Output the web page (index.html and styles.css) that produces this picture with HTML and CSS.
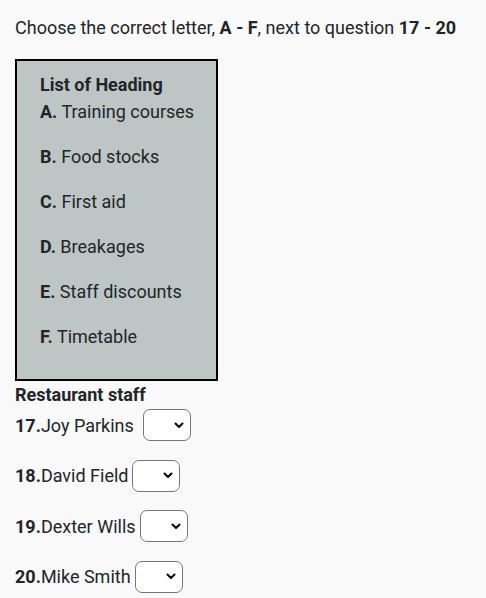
FILE: index.html
```html
<!DOCTYPE html>
<html>
<head>
<meta charset="utf-8">
<link rel="stylesheet" href="styles.css">
</head>
<body>
<div class="page">
  <p class="intro">Choose the correct letter, <b>A - F</b>, next to question <b>17 - 20</b></p>
  <div class="box">
    <div class="box-title">List of Heading</div>
    <p class="item"><b>A.</b> Training courses</p>
    <p class="item"><b>B.</b> Food stocks</p>
    <p class="item"><b>C.</b> First aid</p>
    <p class="item"><b>D.</b> Breakages</p>
    <p class="item"><b>E.</b> Staff discounts</p>
    <p class="item"><b>F.</b> Timetable</p>
  </div>
  <div class="staff-title">Restaurant staff</div>
  <div class="rows">
    <div class="row"><span class="label"><b>17.</b>Joy Parkins</span><span class="gap-wide"></span><select class="pick"><option></option><option>A</option><option>B</option><option>C</option><option>D</option><option>E</option><option>F</option></select></div>
    <div class="row"><span class="label"><b>18.</b>David Field</span><select class="pick"><option></option><option>A</option><option>B</option><option>C</option><option>D</option><option>E</option><option>F</option></select></div>
    <div class="row"><span class="label"><b>19.</b>Dexter Wills</span><select class="pick"><option></option><option>A</option><option>B</option><option>C</option><option>D</option><option>E</option><option>F</option></select></div>
    <div class="row"><span class="label"><b>20.</b>Mike Smith</span><select class="pick"><option></option><option>A</option><option>B</option><option>C</option><option>D</option><option>E</option><option>F</option></select></div>
  </div>
</div>
</body>
</html>
```

FILE: styles.css
```css
html, body {
  margin: 0;
  padding: 0;
  background: #f9f9f9;
}
body {
  font-family: Roboto, "Liberation Sans", sans-serif;
  font-size: 18px;
  line-height: 27px;
  color: #212529;
}
b { font-weight: 700; }
.page {
  padding: 14px 15px 0 15px;
}
.intro {
  margin: 0 0 18px 0;
}
.box {
  width: 203px;
  box-sizing: border-box;
  border: 2px solid #000;
  background: #bdc5c5;
  padding: 10px 8px 11px 23px;
}
.box-title {
  font-weight: 700;
}
.item {
  margin: 0 0 18px 0;
}
.staff-title {
  font-weight: 700;
}
.rows {
  display: flex;
  flex-direction: column;
  gap: 18.5px;
  padding-top: 1px;
}
.row {
  display: flex;
  align-items: center;
  height: 32px;
}
.label {
  margin-right: 4px;
}
.gap-wide {
  width: 5px;
}
.pick {
  appearance: none;
  -webkit-appearance: none;
  width: 48px;
  height: 32px;
  box-sizing: border-box;
  border: 1px solid #767676;
  border-radius: 7px;
  background-color: #fff;
  background-image: url("data:image/svg+xml;utf8,<svg xmlns='http://www.w3.org/2000/svg' width='10' height='7' viewBox='0 0 10 7'><path d='M1.5 1.5 L5 5 L8.5 1.5' fill='none' stroke='black' stroke-width='2' stroke-linecap='round' stroke-linejoin='round'/></svg>");
  background-repeat: no-repeat;
  background-position: right 6px center;
  background-size: 10px 7px;
  font-family: Roboto, sans-serif;
  font-size: 14px;
  padding: 0 4px;
  margin: 0;
}
```
